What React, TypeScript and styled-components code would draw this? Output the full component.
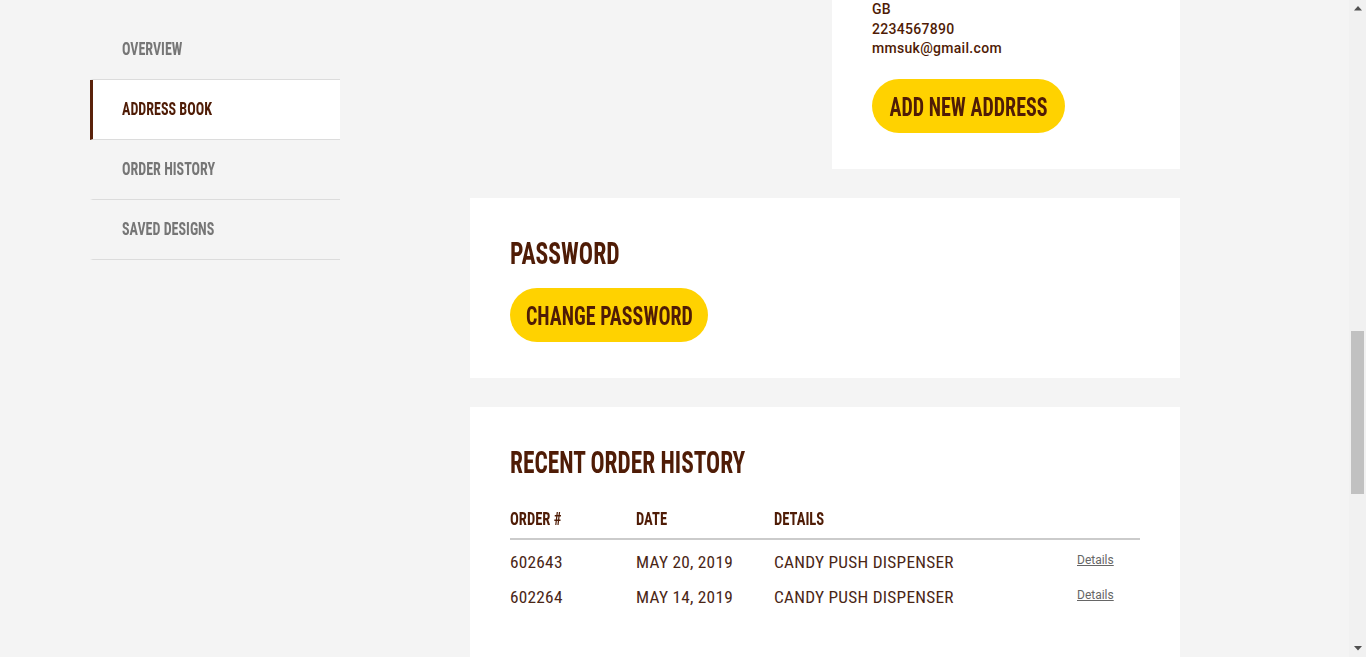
import React, { useLayoutEffect, useRef } from "react";
import styled, { createGlobalStyle, css } from "styled-components";

const brown = "#4f1c06";
const ink = "#4a2616";
const yellow = "#ffd200";
const cond = `"Roboto Condensed", "DejaVu Sans Condensed", sans-serif`;
const sans = `Roboto, "Liberation Sans", Arial, sans-serif`;

const GlobalStyle = createGlobalStyle`
  html, body { margin: 0; height: 100%; overflow: hidden; }
  body { background: #f4f4f4; font-family: ${sans}; }
  * { box-sizing: border-box; }
`;

const Frame = styled.div`
  display: flex;
  height: 100vh;
`;

const Scroller = styled.div`
  flex: 1;
  overflow-y: auto;
  background: #f4f4f4;
  scrollbar-width: none;
  &::-webkit-scrollbar {
    display: none;
  }
`;

const ScrollRail = styled.div`
  width: 17px;
  display: flex;
  flex-direction: column;
  background: #f1f1f1;
`;

const RailButton = styled.div`
  height: 17px;
  display: flex;
  align-items: center;
  justify-content: center;
`;

const Track = styled.div`
  flex: 1;
  display: flex;
  flex-direction: column;
`;

const TrackGap = styled.div<{ $grow: number }>`
  flex: ${(p) => p.$grow} 1 0;
`;

const Thumb = styled.div`
  height: 163px;
  margin: 0 2px;
  background: #c1c1c1;
`;

const Layout = styled.div`
  display: grid;
  grid-template-columns: 250px 710px;
  column-gap: 130px;
  padding: 0 0 80px 90px;
  align-items: start;
`;

const Side = styled.nav`
  position: sticky;
  top: 20px;
`;

const NavItem = styled.a<{ $active?: boolean }>`
  display: flex;
  align-items: center;
  height: 60px;
  padding-left: 29px;
  border-left: 3px solid ${(p) => (p.$active ? "#5a220b" : "transparent")};
  border-bottom: 1px solid #dcdcdc;
  background: ${(p) => (p.$active ? "#fff" : "transparent")};
  color: ${(p) => (p.$active ? brown : "#767676")};
  font: 700 18.5px/1 ${cond};
  text-decoration: none;
  cursor: pointer;
`;

const Squeeze = styled.span<{ $center?: boolean; $scale?: number }>`
  display: inline-block;
  white-space: nowrap;
  transform: scaleX(${(p) => p.$scale ?? 0.74});
  transform-origin: ${(p) => (p.$center ? "center" : "left")} center;
`;

const Main = styled.main`
  display: flex;
  flex-direction: column;
  gap: 29px;
`;

const Card = styled.section<{ $bottom?: number }>`
  background: #fff;
  padding: 39px 40px ${(p) => p.$bottom ?? 36}px;
`;

const AddressCard = styled.section`
  align-self: flex-end;
  width: 348px;
  background: #fff;
  padding: 40px 40px 36px;
`;

const Heading = styled.h2`
  margin: 0;
  font: 700 32px/1 ${cond};
  color: ${brown};
`;

const PillButton = styled.button<{ $width: number; $top: number }>`
  display: flex;
  align-items: center;
  justify-content: center;
  width: ${(p) => p.$width}px;
  height: 54px;
  margin-top: ${(p) => p.$top}px;
  padding: 2px 0 0;
  border: none;
  border-radius: 27px;
  background: ${yellow};
  color: ${brown};
  font: 700 26px/1 ${cond};
  cursor: pointer;
`;

const Line = styled.div`
  font: 500 14px/19.5px ${sans};
  letter-spacing: 0.3px;
  color: ${brown};
`;

const columns = css`
  display: grid;
  grid-template-columns: 126px 138px 1fr 63px;
`;

const TableHead = styled.div`
  ${columns};
  margin-top: 31px;
  padding-bottom: 10px;
  border-bottom: 2px solid #cbcbcb;
`;

const HeadCell = styled.div`
  font: 700 19px/1 ${cond};
  color: ${brown};
`;

const OrderRow = styled.div`
  ${columns};
  align-items: start;
  height: 35px;
  padding-top: 14px;
`;

const Cell = styled.div`
  font: 400 17.3px/1 ${cond};
  letter-spacing: 0.25px;
  color: ${ink};
`;

const DetailsLink = styled.a`
  font: 400 12px/1 ${sans};
  color: #666;
  text-decoration: underline;
  cursor: pointer;
`;

const Arrow = ({ down }: { down?: boolean }) => (
  <svg width="8" height="5" viewBox="0 0 8 5">
    <polygon points={down ? "0,0 8,0 4,4.5" : "0,4.5 8,4.5 4,0"} fill="#505050" />
  </svg>
);

const navItems = ["Overview", "Address Book", "Order History", "Saved Designs"];

const orders = [
  { id: "602643", date: "MAY 20, 2019", item: "CANDY PUSH DISPENSER" },
  { id: "602264", date: "MAY 14, 2019", item: "CANDY PUSH DISPENSER" },
];

const contact = ["GB", "2234567890", "mmsuk@gmail.com"];

export default function App() {
  const scrollRef = useRef<HTMLDivElement>(null);
  const orderRef = useRef<HTMLElement>(null);

  useLayoutEffect(() => {
    const place = () => {
      const s = scrollRef.current;
      const c = orderRef.current;
      if (!s || !c) return;
      s.scrollTop += c.getBoundingClientRect().top - 407;
    };
    place();
    document.fonts?.ready.then(place);
  }, []);

  return (
    <>
      <GlobalStyle />
      <Frame>
        <Scroller ref={scrollRef}>
          <Layout>
            <Side>
              {navItems.map((n) => (
                <NavItem key={n} $active={n === "Address Book"}>
                  <Squeeze $scale={0.76}>{n.toUpperCase()}</Squeeze>
                </NavItem>
              ))}
            </Side>
            <Main>
              <AddressCard>
                {contact.map((l) => (
                  <Line key={l}>{l}</Line>
                ))}
                <PillButton $width={193} $top={20}>
                  <Squeeze $center $scale={0.77}>
                    ADD NEW ADDRESS
                  </Squeeze>
                </PillButton>
              </AddressCard>
              <Card>
                <Heading>
                  <Squeeze>PASSWORD</Squeeze>
                </Heading>
                <PillButton $width={198} $top={19}>
                  <Squeeze $center $scale={0.77}>
                    CHANGE PASSWORD
                  </Squeeze>
                </PillButton>
              </Card>
              <Card ref={orderRef} $bottom={60}>
                <Heading>
                  <Squeeze $scale={0.73}>RECENT ORDER HISTORY</Squeeze>
                </Heading>
                <TableHead>
                  <HeadCell>
                    <Squeeze $scale={0.77}>ORDER #</Squeeze>
                  </HeadCell>
                  <HeadCell>
                    <Squeeze $scale={0.77}>DATE</Squeeze>
                  </HeadCell>
                  <HeadCell>
                    <Squeeze $scale={0.77}>DETAILS</Squeeze>
                  </HeadCell>
                  <HeadCell />
                </TableHead>
                {orders.map((o) => (
                  <OrderRow key={o.id}>
                    <Cell>{o.id}</Cell>
                    <Cell>{o.date}</Cell>
                    <Cell>{o.item}</Cell>
                    <DetailsLink>Details</DetailsLink>
                  </OrderRow>
                ))}
              </Card>
            </Main>
          </Layout>
        </Scroller>
        <ScrollRail>
          <RailButton>
            <Arrow />
          </RailButton>
          <Track>
            <TrackGap $grow={314} />
            <Thumb />
            <TrackGap $grow={146} />
          </Track>
          <RailButton>
            <Arrow down />
          </RailButton>
        </ScrollRail>
      </Frame>
    </>
  );
}
